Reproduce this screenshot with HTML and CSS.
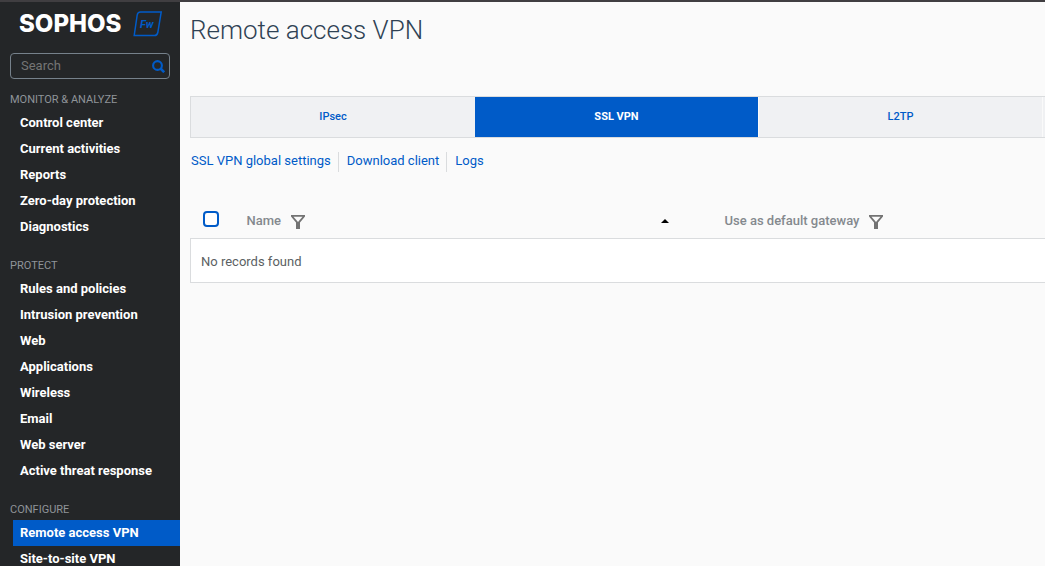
FILE: index.html
```html
<!DOCTYPE html>
<html lang="en">
<head>
<meta charset="utf-8">
<title>Remote access VPN</title>
<link rel="stylesheet" href="styles.css">
</head>
<body>
<div class="app">
  <aside class="sidebar">
    <div class="brand">
      <span class="brand-name">SOPHOS</span>
      <svg class="brand-badge" width="30" height="26" viewBox="0 0 30 26" role="img" aria-label="Firewall">
        <path d="M7.500 1H28.200L24.800 21.500Q24.200 24.500 21.500 24.500H1.200L4.200 4Q4.700 1 7.500 1Z" fill="none" stroke="#005bc8" stroke-width="1.500"/>
        <text class="badge-text" x="7" y="17">Fw</text>
      </svg>
    </div>
    <form class="search">
      <input class="search-input" type="text" placeholder="Search" aria-label="Search">
      <button class="search-button" type="button" aria-label="Run search">
        <svg width="13" height="13" viewBox="0 0 13 13"><circle cx="5.500" cy="5.500" r="4.400" fill="none" stroke="currentColor" stroke-width="2.100"/><path d="M8.500 8.500L12.200 12.200" stroke="currentColor" stroke-width="2.600"/></svg>
      </button>
    </form>
    <nav class="menu">
      <section class="group">
        <h2 class="group-title">MONITOR &amp; ANALYZE</h2>
        <a class="item" href="#">Control center</a>
        <a class="item" href="#">Current activities</a>
        <a class="item" href="#">Reports</a>
        <a class="item" href="#">Zero-day protection</a>
        <a class="item" href="#">Diagnostics</a>
      </section>
      <section class="group">
        <h2 class="group-title">PROTECT</h2>
        <a class="item" href="#">Rules and policies</a>
        <a class="item" href="#">Intrusion prevention</a>
        <a class="item" href="#">Web</a>
        <a class="item" href="#">Applications</a>
        <a class="item" href="#">Wireless</a>
        <a class="item" href="#">Email</a>
        <a class="item" href="#">Web server</a>
        <a class="item" href="#">Active threat response</a>
      </section>
      <section class="group">
        <h2 class="group-title">CONFIGURE</h2>
        <a class="item item-active" href="#" aria-current="page">Remote access VPN</a>
        <a class="item" href="#">Site-to-site VPN</a>
      </section>
    </nav>
  </aside>
  <main class="content">
    <h1 class="title">Remote access VPN</h1>
    <nav class="tabs">
      <a class="tab" href="#">IPsec</a>
      <a class="tab tab-active" href="#" aria-current="true">SSL VPN</a>
      <a class="tab" href="#">L2TP</a>
    </nav>
    <div class="links">
      <a class="link" href="#">SSL VPN global settings</a>
      <a class="link" href="#">Download client</a>
      <a class="link" href="#">Logs</a>
    </div>
    <table class="records">
      <thead>
        <tr>
          <th class="col-check"><input class="check" type="checkbox" aria-label="Select all"></th>
          <th class="col-name">
            <div class="head">
              <span>Name</span>
              <svg class="funnel" width="14" height="16" viewBox="0 0 14 16"><path d="M0 2H14V3.500L9 9.500V16H5V9.500L0 3.500Z" fill="#737373"/><path d="M2.500 3.700H11.500L7 9Z" fill="#fafafa"/></svg>
              <svg class="sort" width="8" height="4" viewBox="0 0 8 4"><path d="M0 4L4 0L8 4Z" fill="#000"/></svg>
            </div>
          </th>
          <th class="col-gateway">
            <div class="head">
              <span>Use as default gateway</span>
              <svg class="funnel" width="14" height="16" viewBox="0 0 14 16"><path d="M0 2H14V3.500L9 9.500V16H5V9.500L0 3.500Z" fill="#737373"/><path d="M2.500 3.700H11.500L7 9Z" fill="#fafafa"/></svg>
            </div>
          </th>
        </tr>
      </thead>
      <tbody>
        <tr><td class="empty" colspan="3">No records found</td></tr>
      </tbody>
    </table>
  </main>
</div>
</body>
</html>
```
FILE: styles.css
```css
* { box-sizing: border-box; }
body {
  margin: 0;
  background: #fafafa;
  font-family: Roboto, "Liberation Sans", sans-serif;
  font-size: 13px;
}
a { text-decoration: none; }
.app {
  display: flex;
  height: 100vh;
  overflow: hidden;
  border-top: 2px solid #403e41;
}
.sidebar {
  flex: 0 0 180px;
  min-width: 0;
  background: #242628;
}
.brand {
  display: flex;
  align-items: center;
  gap: 12px;
  height: 43px;
  padding-left: 19px;
}
.brand-name {
  color: #fff;
  font: 800 24px/28px Inter, sans-serif;
}
.badge-text {
  fill: #005bc8;
  font: italic 700 11px Roboto, sans-serif;
}
.search {
  display: flex;
  align-items: center;
  height: 26px;
  margin: 8px 10px 0;
  padding: 0 4px 0 10px;
  border: 1px solid #76818b;
  border-radius: 4px;
}
.search-input {
  flex: 1;
  width: 100%;
  min-width: 0;
  padding: 0;
  border: 0;
  outline: 0;
  background: none;
  color: #fff;
  font: 13px/20px Roboto, sans-serif;
}
.search-input::placeholder { color: #757575; opacity: 1; }
.search-button {
  display: flex;
  padding: 0;
  border: 0;
  background: none;
  color: #005bc8;
}
.menu {
  display: flex;
  flex-direction: column;
  gap: 12px;
  padding-top: 7px;
}
.group-title {
  margin: 0;
  padding: 4px 0 0 10px;
  color: #8f9499;
  font-size: 11px;
  font-weight: 400;
  line-height: 20px;
}
.item {
  display: block;
  margin-left: 13px;
  padding-left: 7px;
  color: #fff;
  font-weight: 700;
  line-height: 26px;
}
.item-active { background: #005bc8; }
.content {
  flex: 1;
  min-width: 0;
  padding-left: 10px;
}
.title {
  margin: 0;
  padding-top: 10px;
  color: #2f4254;
  font-size: 26px;
  font-weight: 300;
  line-height: 36px;
}
.tabs {
  display: grid;
  grid-template-columns: repeat(3, 1fr);
  margin-top: 48px;
  padding-right: 2px;
  border: 1px solid #dadcde;
  border-right: 0;
  background: #f0f1f3;
}
.tab {
  border-right: 1px solid #fafafa;
  color: #005bc8;
  font-size: 11px;
  font-weight: 500;
  line-height: 40px;
  text-align: center;
}
.tab:first-child { border-right: 0; }
.tab-active {
  background: #005bc8;
  color: #fff;
  font-weight: 700;
}
.links {
  display: flex;
  padding: 14px 0 0 1px;
}
.link {
  margin-right: 8px;
  padding: 0 7px 2px 0;
  border-right: 1px solid #dadcde;
  color: #005bc8;
  line-height: 18px;
}
.link:last-child { border-right: 0; }
.records {
  width: 100%;
  margin-top: 28px;
  border-collapse: collapse;
  table-layout: fixed;
}
.records th {
  height: 38px;
  padding: 0;
  color: #84898e;
  font-weight: 500;
  text-align: left;
}
.col-check { width: 56px; }
.col-name { width: 478px; }
.check {
  display: block;
  appearance: none;
  width: 16px;
  height: 16px;
  margin: 0 0 0 12px;
  border: 2px solid #005bc8;
  border-radius: 4px;
  background: #fff;
}
.head {
  display: flex;
  align-items: center;
  padding-top: 4px;
}
.funnel { margin-left: 10px; }
.sort { margin: 0 56px 0 auto; }
.empty {
  height: 44px;
  padding: 2px 10px 0;
  border: 1px solid #dadcde;
  border-right: 0;
  background: #fff;
  color: #5b5f63;
}
```
